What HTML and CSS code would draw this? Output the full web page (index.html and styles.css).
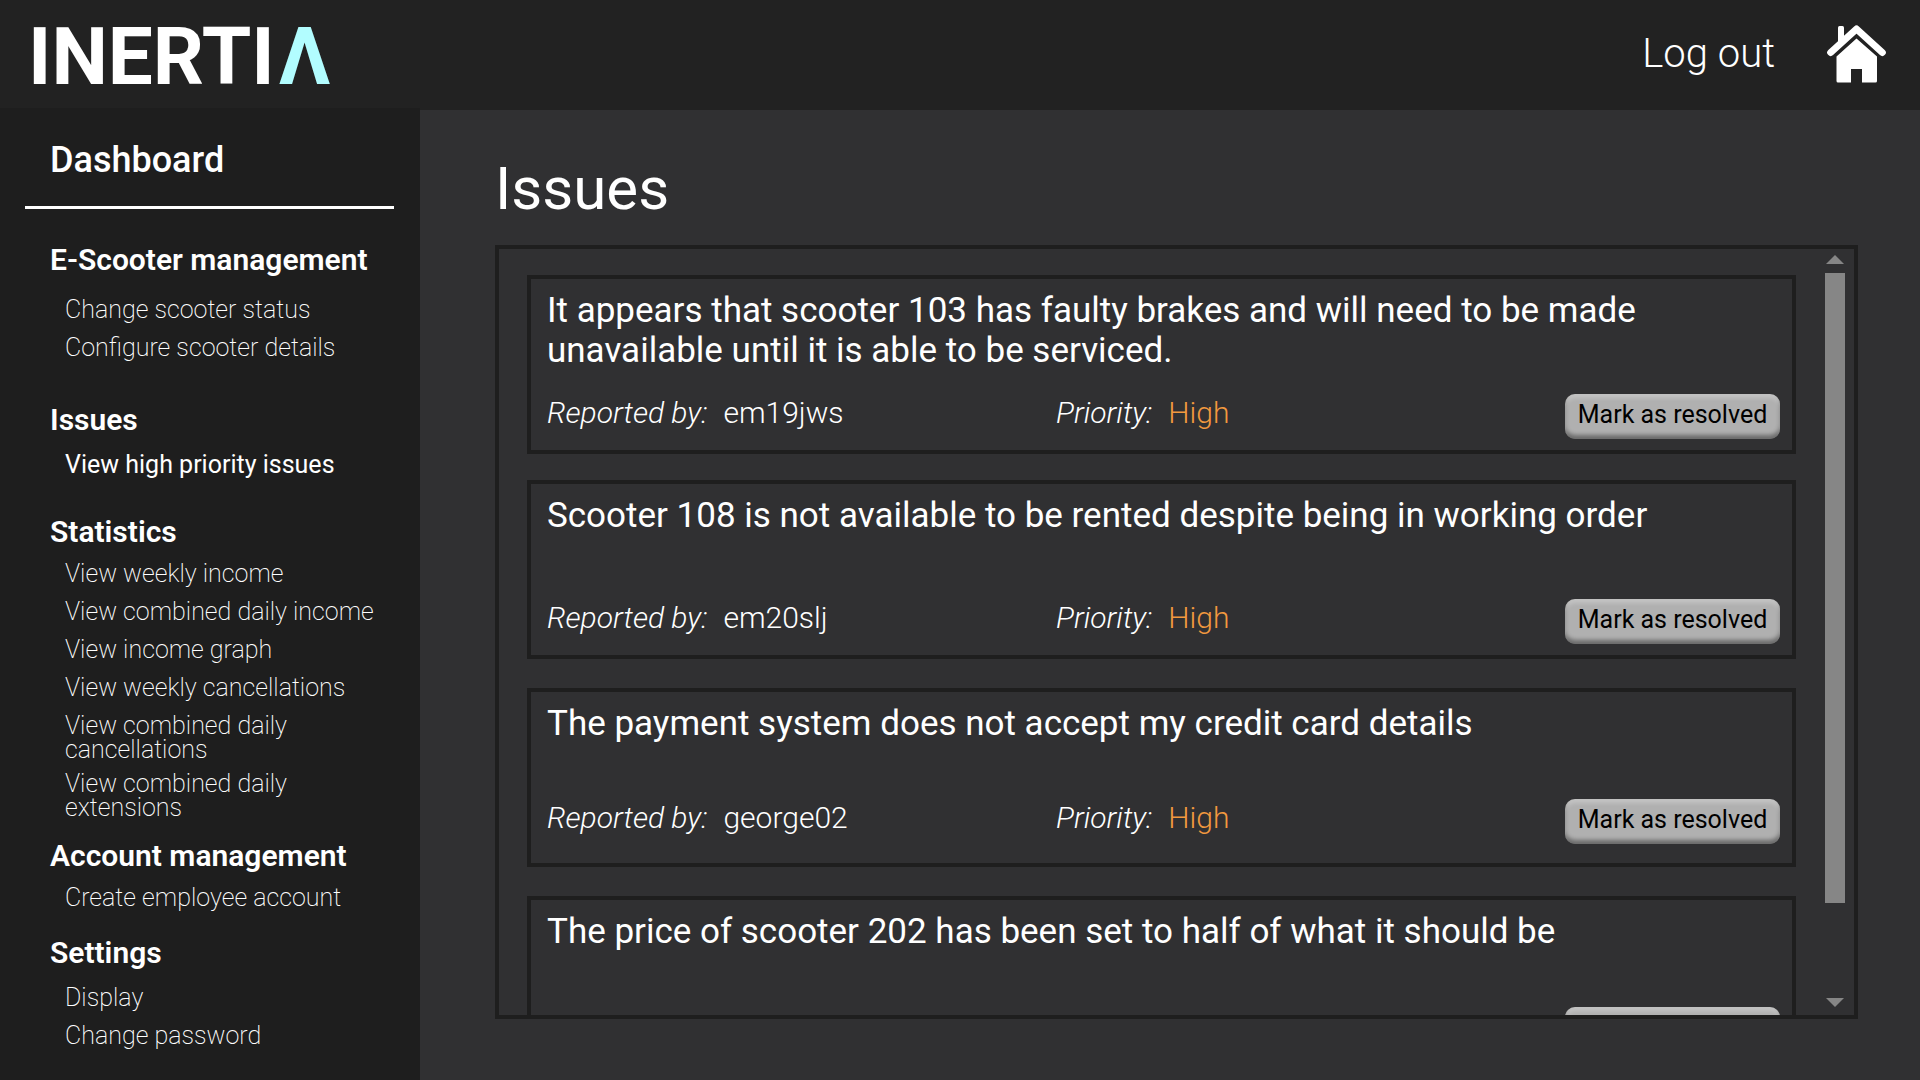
FILE: index.html
```
<!DOCTYPE html>
<html lang="en">
<head>
<meta charset="utf-8">
<meta name="viewport" content="width=device-width, initial-scale=1">
<title>Inertia – Issues</title>
<link rel="stylesheet" href="styles.css">
</head>
<body>
<header class="topbar">
  <a class="logo" href="#">INERTI<span class="logo-accent">Λ</span></a>
  <nav class="topnav" aria-label="Account">
    <a class="logout" href="#">Log out</a>
    <a class="home" href="#" aria-label="Home">
      <svg class="home-icon" viewBox="0 0 60 60" aria-hidden="true">
        <path fill="#fff" d="M11 3.500Q11 2 12.500 2H15.500Q17 2 17 3.500V16L11 22Z"/>
        <path fill="none" stroke="#fff" stroke-width="7" stroke-linecap="round" stroke-linejoin="round" d="M3.700 28.500L29.500 5L55.300 28.500"/>
        <path fill="#fff" d="M29.500 14.500L50 32.500V57Q50 58.500 48.500 58.500H35V45H24V58.500H11Q9.500 58.500 9.500 57V32.500Z"/>
      </svg>
    </a>
  </nav>
</header>
<div class="layout">
  <nav class="sidebar" aria-label="Dashboard">
    <h2 class="sidebar-title">Dashboard</h2>
    <section class="group group-scooters">
      <h3>E-Scooter management</h3>
      <ul>
        <li><a href="#">Change scooter status</a></li>
        <li><a href="#">Configure scooter details</a></li>
      </ul>
    </section>
    <section class="group group-issues">
      <h3>Issues</h3>
      <ul>
        <li><a class="current" href="#" aria-current="page">View high priority issues</a></li>
      </ul>
    </section>
    <section class="group group-statistics">
      <h3>Statistics</h3>
      <ul>
        <li><a href="#">View weekly income</a></li>
        <li><a href="#">View combined daily income</a></li>
        <li><a href="#">View income graph</a></li>
        <li><a href="#">View weekly cancellations</a></li>
        <li><a href="#">View combined daily cancellations</a></li>
        <li><a href="#">View combined daily extensions</a></li>
      </ul>
    </section>
    <section class="group group-account">
      <h3>Account management</h3>
      <ul>
        <li><a href="#">Create employee account</a></li>
      </ul>
    </section>
    <section class="group group-settings">
      <h3>Settings</h3>
      <ul>
        <li><a href="#">Display</a></li>
        <li><a href="#">Change password</a></li>
      </ul>
    </section>
  </nav>
  <main class="content">
    <h1>Issues</h1>
    <div class="panel">
      <div class="issues">
        <article class="issue">
          <h2>It appears that scooter 103 has faulty brakes and will need to be made unavailable until it is able to be serviced.</h2>
          <div class="meta">
            <p><em>Reported by:</em> <span>em19jws</span></p>
            <p><em>Priority:</em> <span class="high">High</span></p>
            <button type="button">Mark as resolved</button>
          </div>
        </article>
        <article class="issue">
          <h2>Scooter 108 is not available to be rented despite being in working order</h2>
          <div class="meta">
            <p><em>Reported by:</em> <span>em20slj</span></p>
            <p><em>Priority:</em> <span class="high">High</span></p>
            <button type="button">Mark as resolved</button>
          </div>
        </article>
        <article class="issue issue-tight">
          <h2>The payment system does not accept my credit card details</h2>
          <div class="meta">
            <p><em>Reported by:</em> <span>george02</span></p>
            <p><em>Priority:</em> <span class="high">High</span></p>
            <button type="button">Mark as resolved</button>
          </div>
        </article>
        <article class="issue issue-tight">
          <h2>The price of scooter 202 has been set to half of what it should be</h2>
          <div class="meta">
            <button type="button">Mark as resolved</button>
          </div>
        </article>
      </div>
      <div class="scrollbar" aria-hidden="true">
        <svg class="arrow" viewBox="0 0 18 9"><path d="M9 0L18 9H0Z"/></svg>
        <div class="track"><div class="thumb"></div></div>
        <svg class="arrow" viewBox="0 0 18 9"><path d="M0 0H18L9 9Z"/></svg>
      </div>
    </div>
  </main>
</div>
</body>
</html>
```
FILE: styles.css
```
* { box-sizing: border-box; }

body {
  margin: 0;
  height: 100vh;
  display: flex;
  flex-direction: column;
  background: #303032;
  color: #fff;
  font-family: Roboto, sans-serif;
}

h1, h2, h3, p, ul { margin: 0; padding: 0; }
ul { list-style: none; }
a { color: inherit; text-decoration: none; }

.topbar {
  flex: none;
  height: 108px;
  padding: 0 33px 0 28px;
  display: flex;
  align-items: center;
  justify-content: space-between;
  background: #222;
}

.logo {
  padding-top: 6px;
  font-size: 80px;
  line-height: 102px;
  font-weight: 700;
}

.logo-accent { margin-left: 4px; color: #b2fdff; }

.topnav {
  display: flex;
  align-items: center;
  gap: 52px;
}

.logout {
  font-size: 40px;
  line-height: 48px;
  font-weight: 300;
}

.home-icon { display: block; width: 60px; height: 60px; }

.layout {
  flex: 1;
  min-height: 0;
  display: grid;
  grid-template-columns: 420px minmax(0, 1fr);
}

.sidebar {
  padding: 31px 26px 24px 25px;
  background: #1e1e1e;
}

.sidebar-title {
  height: 70px;
  padding-left: 25px;
  border-bottom: 3px solid #fff;
  font-size: 36px;
  line-height: 42px;
  font-weight: 500;
}

.group { padding-left: 25px; }

.group h3 {
  margin-bottom: 12px;
  font-size: 30px;
  line-height: 36px;
  font-weight: 600;
}

.group ul {
  padding-left: 15px;
  display: flex;
  flex-direction: column;
  gap: 10px;
}

.group li { min-height: 28px; }

.group a {
  display: block;
  font-size: 25px;
  line-height: 24px;
  font-weight: 200;
}

.group .current { font-weight: 400; }

.group-scooters { margin-top: 33px; }
.group-scooters h3 { margin-bottom: 20px; }
.group-issues { margin-top: 38px; }
.group-issues h3, .group-settings h3 { margin-bottom: 15px; }
.group-statistics { margin-top: 33px; }
.group-account { margin-top: 18px; }
.group-settings { margin-top: 21px; }

.content {
  min-height: 0;
  padding: 44px 62px 61px 75px;
  border-top: 2px solid #222;
  display: flex;
  flex-direction: column;
}

h1 {
  margin-bottom: 21px;
  font-size: 60px;
  line-height: 70px;
  font-weight: 400;
}

.panel {
  flex: 1;
  min-height: 0;
  display: flex;
  border: 4px solid #1e1e1e;
}

.issues {
  flex: 1;
  min-width: 0;
  padding: 26px 29px 26px 28px;
  display: flex;
  flex-direction: column;
  gap: 26px;
  overflow-y: auto;
  scrollbar-width: none;
}

.issue {
  flex: none;
  min-height: 179px;
  padding: 12px 12px 10px 16px;
  border: 4px solid #1e1e1e;
}

.issue h2 {
  min-height: 80px;
  margin-bottom: 23px;
  padding-right: 120px;
  font-size: 35px;
  line-height: 40px;
  font-weight: 400;
}

.issue-tight { margin-top: 3px; }
.issue-tight h2 { margin-bottom: 15px; }

.meta {
  display: grid;
  grid-template-columns: 1fr 1fr auto;
  font-size: 30px;
  line-height: 38px;
  font-weight: 300;
}

.meta p { display: flex; gap: 16px; }
.meta button { grid-column: 3; }
.high { color: #f2993f; }

button {
  width: 215px;
  height: 45px;
  padding: 0 0 3px;
  border: 0;
  border-radius: 10px;
  background: #b0b0b0;
  box-shadow: inset 0 4px 4px rgba(255, 255, 255, 0.25), inset 0 -4px 4px rgba(0, 0, 0, 0.4);
  color: #000;
  font: 400 25px/30px Roboto, sans-serif;
  cursor: pointer;
}

.scrollbar {
  flex: none;
  width: 20px;
  margin: 6px 9px 8px 0;
  display: flex;
  flex-direction: column;
  align-items: center;
  gap: 9px;
}

.arrow { flex: none; width: 18px; height: 9px; fill: #868686; }
.track { flex: 1; width: 100%; }
.thumb { height: 88%; background: #868686; }
```
